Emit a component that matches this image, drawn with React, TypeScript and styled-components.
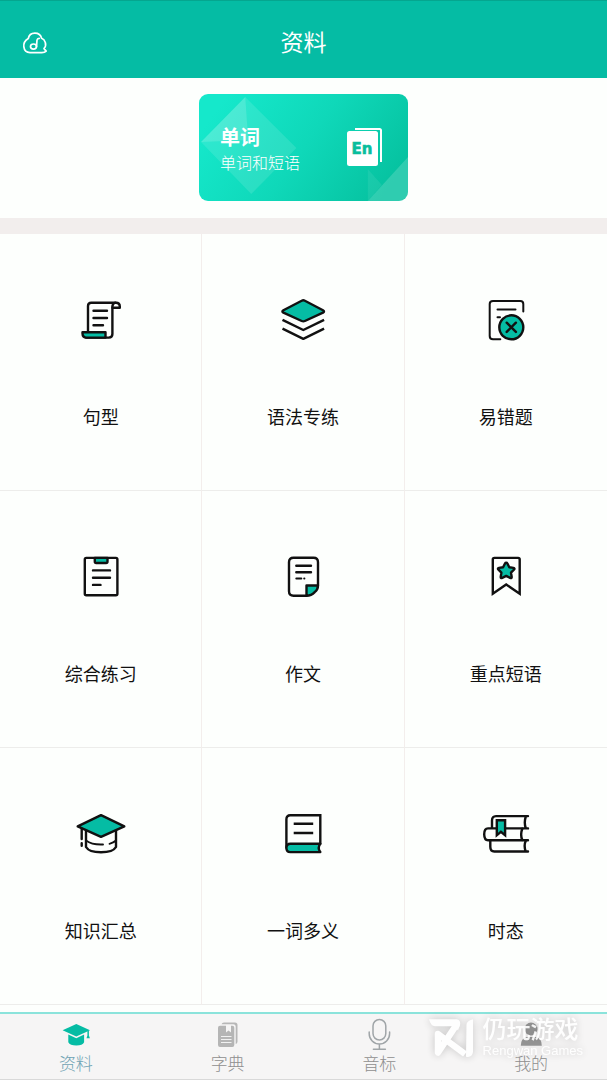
import React from "react";
import styled, { createGlobalStyle } from "styled-components";

const GREEN = "#05bca4";
const INK = "#111";

const GlobalStyle = createGlobalStyle`
  *, *::before, *::after { box-sizing: border-box; }
  body {
    margin: 0;
    background: #fdfffd;
    font-family: Roboto, "Noto Sans CJK SC", sans-serif;
  }
  button { font: inherit; color: inherit; cursor: pointer; }
`;

const Page = styled.div`
  display: flex;
  flex-direction: column;
  min-height: 100vh;
`;

const Header = styled.header`
  display: grid;
  grid-template-columns: 48px 1fr 48px;
  align-items: center;
  height: 78px;
  padding: 9px 12px 0;
  background: ${GREEN};
  border-top: 1px solid #05a68f;
  color: #fff;
`;

const IconButton = styled.button`
  display: flex;
  padding: 8px;
  border: 0;
  background: none;
`;

const Title = styled.h1`
  margin: 0;
  font-size: 23px;
  line-height: 32px;
  font-weight: 400;
  text-align: center;
`;

const Promo = styled.section`
  display: flex;
  justify-content: center;
  padding: 16px 16px 17px;
`;

const PromoCard = styled.button`
  position: relative;
  display: flex;
  align-items: center;
  justify-content: space-between;
  width: 209px;
  height: 107px;
  padding: 0 25px 0 21px;
  overflow: hidden;
  border: 0;
  border-radius: 9px;
  background: linear-gradient(125deg, #15e8cb 10%, #0fd8b9 50%, #06c2a0 90%);
  color: #fff;
  text-align: left;
`;

const PromoPattern = styled.svg`
  position: absolute;
  inset: 0;
  width: 100%;
  height: 100%;
`;

const PromoText = styled.span`
  position: relative;
  display: flex;
  flex-direction: column;
  padding-top: 5px;
`;

const PromoTitle = styled.strong`
  font-size: 20px;
  line-height: 28px;
  font-weight: 700;
`;

const PromoSubtitle = styled.span`
  font-size: 16px;
  line-height: 24px;
  font-weight: 300;
`;

const WordBook = styled.svg`
  position: relative;
  width: 36px;
  height: 40px;
`;

const Band = styled.div`
  height: 16px;
  background: #f2eeed;
`;

const Grid = styled.main`
  flex: 1;
  display: grid;
  grid-template-columns: repeat(3, 1fr);
  grid-auto-rows: 1fr;
`;

const Tile = styled.button`
  display: flex;
  flex-direction: column;
  align-items: center;
  justify-content: center;
  gap: 56px;
  padding: 16px 0 20px;
  border: 0;
  border-right: 1px solid #f3eeec;
  border-bottom: 1px solid #ededeb;
  background: none;
  color: ${INK};

  &:nth-child(3n) { border-right: 0; }
`;

const TileIcon = styled.svg`
  width: 60px;
  height: 60px;
  fill: none;
  stroke: ${INK};
  stroke-width: 2.4;
  stroke-linecap: round;
  stroke-linejoin: round;
`;

const TileLabel = styled.span`
  font-size: 18px;
  line-height: 24px;
`;

const TabBar = styled.nav`
  position: relative;
  display: grid;
  grid-template-columns: repeat(4, 1fr);
  height: 68px;
  margin-top: 7px;
  border-top: 2px solid #8be3db;
  border-bottom: 1px solid #d9d9d9;
  background: #f6f5f5;
`;

const Tab = styled.button<{ $active?: boolean }>`
  display: flex;
  flex-direction: column;
  align-items: center;
  padding: 2px 0 0;
  border: 0;
  background: none;
  color: ${(p) => (p.$active ? "#6fa3b3" : "#8f8f8f")};
`;

const TabIcon = styled.svg`
  width: 36px;
  height: 36px;
`;

const TabLabel = styled.span`
  font-family: "Noto Sans CJK SC", sans-serif;
  font-size: 17px;
  line-height: 22px;
  font-weight: 300;
`;

const Watermark = styled.div`
  position: absolute;
  top: 2px;
  right: 24px;
  display: flex;
  gap: 8px;
  color: #fff;
  opacity: 0.9;
  pointer-events: none;
  filter: drop-shadow(0 0 4px rgba(0, 0, 0, 0.22));
`;

const WatermarkLogo = styled.svg`
  width: 46px;
  height: 44px;
`;

const WatermarkText = styled.div`
  display: flex;
  flex-direction: column;
`;

const WatermarkName = styled.span`
  font-size: 24px;
  line-height: 28px;
  font-weight: 500;
`;

const WatermarkLatin = styled.span`
  font-family: "Liberation Sans", sans-serif;
  font-size: 13px;
  line-height: 14px;
`;

const tiles: { label: string; art: React.ReactNode }[] = [
  {
    label: "句型",
    art: (
      <>
        <path d="M17 42V16q0-3.3 3.3-3.3H45q3.8 0 3.8 3.8v1.2h-7.300" />
        <path d="M41.400 17.500q0-4.800 3-4.800M41.400 16v28q0 3.600-3.600 3.600H15" />
        <path d="M11.500 42.300h23v5.300H15.500q-4 0-4-4z" fill={GREEN} />
        <path d="M22.500 20.700h13.500M22.500 28h13.500M22.500 35.200h9.500" />
      </>
    ),
  },
  {
    label: "语法专练",
    art: (
      <>
        <path d="M28.700 10.700q1.600-.8 3.200 0L50 20.200q2 1.200 0 2.400L31.900 31q-1.600.7-3.200 0L10.400 22.600q-2-1.200 0-2.400z" fill={GREEN} />
        <path d="M9.500 29.800l20.800 10.200 20.800-10.200M9.500 38.600l20.800 10.200 20.800-10.200" strokeLinecap="butt" />
      </>
    ),
  },
  {
    label: "易错题",
    art: (
      <>
        <path d="M47.300 21.500V14q0-3-3-3H17q-3.300 0-3.300 3v32q0 3.300 3.300 3.300h7.300" strokeWidth="2" />
        <path d="M21.500 19.500h18M21.500 27.200h2.500" strokeWidth="2" />
        <circle cx="35.300" cy="37.300" r="12" fill={GREEN} />
        <path d="M30.700 32.700l9.200 9.200M39.900 32.700l-9.200 9.200" />
      </>
    ),
  },
  {
    label: "综合练习",
    art: (
      <>
        <rect x="13.800" y="10.900" width="32.600" height="37.300" rx="1.500" />
        <path d="M23.800 10.900h12.700v3.700q0 1.400-1.400 1.400h-9.900q-1.400 0-1.400-1.400z" fill={GREEN} />
        <path d="M22 23.400h17M22 30.700h17M22 37.900h7.500" />
      </>
    ),
  },
  {
    label: "作文",
    art: (
      <>
        <path d="M33.500 48.800H20.500q-4.500 0-4.500-4.500v-29q0-4.500 4.500-4.500h20q4.500 0 4.500 4.500v23" />
        <path d="M33.500 38.500H45q0 4-3.300 6.600-3.300 3.700-8.200 3.700z" fill={GREEN} />
        <path d="M23.300 18.800h14.700M23.300 25.300h14.700" />
        <path d="M23.300 31.500h5M31.200 31.500h.2" strokeWidth="2" />
      </>
    ),
  },
  {
    label: "重点短语",
    art: (
      <>
        <path d="M16.800 46.800V12.500q0-1.600 1.600-1.600h23.700q1.600 0 1.600 1.600v34.300L30.200 37.500z" strokeLinejoin="miter" />
        <path
          d="M30.200 15.700q.8 0 1.200.8l1.900 3.700 4.100.7q1.800.4.500 1.800l-2.900 3 .7 4.200q.1 1.700-1.500 1l-4-2-4 2q-1.600.7-1.500-1l.7-4.200-2.900-3q-1.300-1.400.5-1.800l4.100-.7 1.900-3.700q.4-.8 1.200-.8z"
          fill={GREEN}
        />
      </>
    ),
  },
  {
    label: "知识汇总",
    art: (
      <>
        <path d="M15 26v17c4 7 26 7 30 0V26" />
        <path d="M15 36.500q6 4.500 17 4M38.500 39.800q4-1 6.500-3.300" strokeWidth="1.900" />
        <path d="M30 11.200L53.300 22.400 30 32.900 6.700 22.400z" fill={GREEN} />
        <path d="M10.700 25v10M10.700 39.200v2.500" />
      </>
    ),
  },
  {
    label: "一词多义",
    art: (
      <>
        <path d="M13.400 43.500V15.200q0-3.900 3.900-3.900H47.300V39.700" strokeLinejoin="miter" />
        <path d="M47.300 39.700H17.400q-4 0-4 4.200t4 4.200h29.900q-3.200-4.200 0-8.400z" fill={GREEN} />
        <path d="M20.700 19.800h19.500M20.700 29h19.500" strokeLinecap="butt" />
      </>
    ),
  },
  {
    label: "时态",
    art: (
      <>
        <path d="M52 12.100H20q-4 0-4 4.500v7.700M49.800 12.500q-2 6 0 11.800M52 24.400H12q-3.800 0-3.800 5.900t3.800 5.900H52" />
        <path d="M46.300 24.800q-2.300 5.700 0 11.200M14.300 36.300v6.500q0 4.700 4 4.700H52M49.800 36.500q-2.300 5.500 0 11" />
        <path d="M20.800 16.300h8.300v15l-4.200-3.400-4.100 3.400z" fill={GREEN} strokeLinejoin="miter" />
      </>
    ),
  },
];

const tabs: { label: string; art: React.ReactNode }[] = [
  {
    label: "资料",
    art: (
      <g fill={GREEN}>
        <path d="M18.300 8L32 14.300 18.300 20.500 4.600 14.300z" />
        <path d="M10.300 18.600l8 3.600 7.800-3.600v7.600q-1.500 3.200-7.800 3.200t-8-3.200z" />
        <path d="M29.400 15h1.500v4.500l1 2.800h-3.400l.9-2.800z" />
      </g>
    ),
  },
  {
    label: "字典",
    art: (
      <>
        <path d="M11.500 8.300q.5-1.800 2.500-1.800h11q2.500 0 2.500 2.500v16.500q0 2-1.800 2.500V10.800q0-2.500-2.500-2.500z" fill="#b7b7b7" />
        <path d="M10 9.700h6v6.800l2.500-2 2.500 2V9.700h1.300q2 0 2 2V29q0 2-2 2H10q-2 0-2-2V11.700q0-2 2-2z" fill="#b5b5b5" />
        <path d="M11 20.500h10.500M11 23.500h10.500M11 26.500h10.500" fill="none" stroke="#f1f1f1" strokeWidth="1" />
      </>
    ),
  },
  {
    label: "音标",
    art: (
      <g fill="none" stroke="#a0a5a8" strokeWidth="1.500" strokeLinecap="round">
        <rect x="12" y="3.500" width="12.800" height="20.500" rx="6.400" />
        <path d="M8.200 16v1.700a10.200 10.200 0 0 0 20.400 0V16M18.400 28v5.200M12.400 33.300h12" />
      </g>
    ),
  },
  {
    label: "我的",
    art: (
      <g fill="#989898">
        <circle cx="18" cy="13" r="6.500" />
        <path d="M7.800 29.700q0-7.700 6-8.700h9q6 1 6 8.700z" />
      </g>
    ),
  },
];

export default function App() {
  return (
    <Page>
      <GlobalStyle />
      <Header>
        <IconButton aria-label="音乐">
          <svg width="30" height="30" viewBox="0 0 30 30" fill="none" stroke="#fff" strokeWidth="1.700" strokeLinecap="round" strokeLinejoin="round">
            <path d="M8.300 9.500C9.500 2.300 20 2.300 21.600 9.300c3.300 1.300 5.800 6.200 2.400 10.300l2.200 2.500q-1.600 1.600-4.700 1.500H10C2.700 23.600 1.500 13.300 8.300 9.500z" />
            <ellipse cx="13.500" cy="17.600" rx="3" ry="2.600" />
            <path d="M16.500 17.600l.5-6.500q.3-1.500 2.200-1.700" />
          </svg>
        </IconButton>
        <Title>资料</Title>
      </Header>

      <Promo>
        <PromoCard>
          <PromoPattern viewBox="0 0 208 107" preserveAspectRatio="none" aria-hidden="true">
            <g fill="#fff">
              <path d="M46 3L2 48l47-2z" opacity=".14" />
              <path d="M46 3l51 51-45 46L2 48z" opacity=".11" />
              <path d="M208 63v44h-40z" opacity=".17" />
              <path d="M168 75l14 16-14 16z" opacity=".07" />
            </g>
          </PromoPattern>
          <PromoText>
            <PromoTitle>单词</PromoTitle>
            <PromoSubtitle>单词和短语</PromoSubtitle>
          </PromoText>
          <WordBook viewBox="0 0 36 40" aria-hidden="true">
            <path d="M8 1h24.500q1.500 0 1.500 1.500V34" fill="none" stroke="#fff" strokeWidth="2" />
            <rect x="0" y="3" width="31" height="35" rx="2.500" fill="#fff" />
            <text x="15" y="26" textAnchor="middle" fontFamily="DejaVu Sans, sans-serif" fontSize="15" fontWeight="700" fill="#08bd9d" stroke="#08bd9d" strokeWidth="0.600">
              En
            </text>
          </WordBook>
        </PromoCard>
      </Promo>
      <Band />

      <Grid>
        {tiles.map((tile) => (
          <Tile key={tile.label}>
            <TileIcon viewBox="0 0 60 60" aria-hidden="true">{tile.art}</TileIcon>
            <TileLabel>{tile.label}</TileLabel>
          </Tile>
        ))}
      </Grid>

      <TabBar>
        {tabs.map((tab, i) => (
          <Tab key={tab.label} $active={i === 0}>
            <TabIcon viewBox="0 0 36 36" aria-hidden="true">{tab.art}</TabIcon>
            <TabLabel>{tab.label}</TabLabel>
          </Tab>
        ))}
        <Watermark>
          <WatermarkLogo viewBox="0 0 46 44" fill="none" stroke="#fff" strokeWidth="6.500" strokeLinejoin="round" aria-hidden="true">
            <path d="M0 3.300h28q4 1 3 6l-2 5-5-4H6q-4 0-6-7z" fill="#fff" stroke="none" />
            <path d="M28 8L9 36.500V18l27 20" />
            <path d="M37.500 9q0-4 6.500-5.700V36q-1 6-7 4.700z" fill="#fff" stroke="none" />
          </WatermarkLogo>
          <WatermarkText>
            <WatermarkName>仍玩游戏</WatermarkName>
            <WatermarkLatin>Rengwan Games</WatermarkLatin>
          </WatermarkText>
        </Watermark>
      </TabBar>
    </Page>
  );
}
